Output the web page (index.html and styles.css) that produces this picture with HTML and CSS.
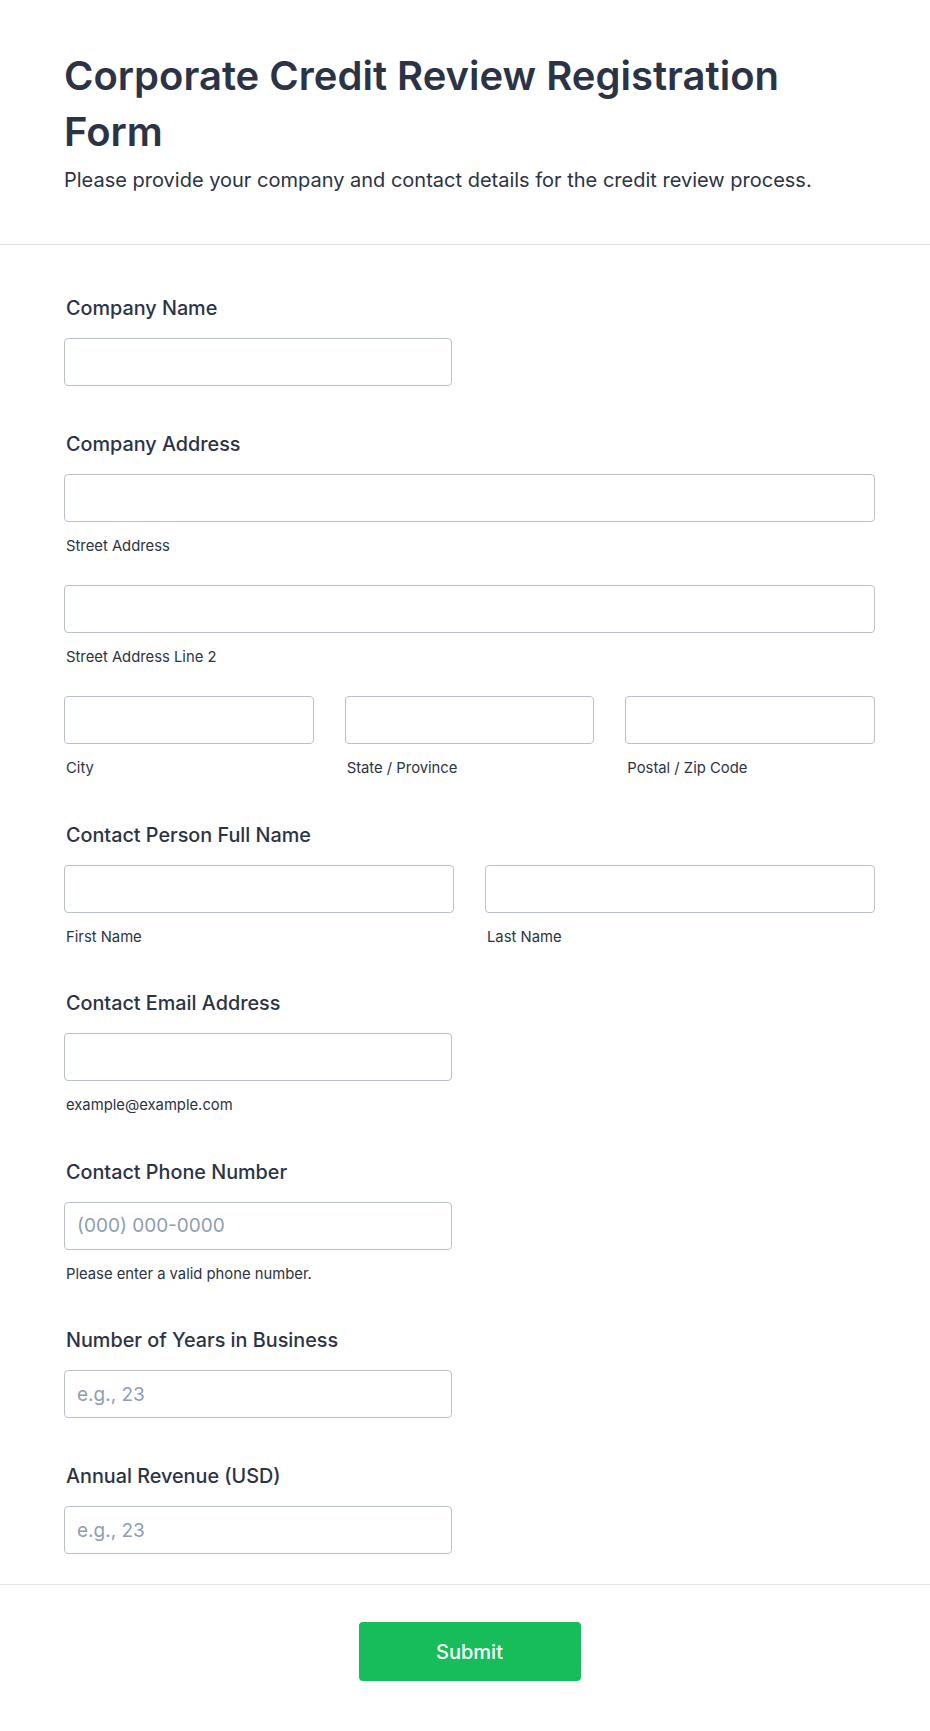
FILE: index.html
```html
<!DOCTYPE html>
<html lang="en">
<head>
<meta charset="utf-8">
<title>Corporate Credit Review Registration Form</title>
<link rel="stylesheet" href="styles.css">
</head>
<body>
<main class="form">
  <header class="form-header">
    <h1 class="form-title">Corporate Credit Review Registration Form</h1>
    <p class="form-subtitle">Please provide your company and contact details for the credit review process.</p>
  </header>

  <section class="form-body">
    <div class="field plain">
      <label class="field-label" for="company">Company Name</label>
      <input class="input half" id="company" type="text">
    </div>

    <div class="field">
      <label class="field-label" for="street1">Company Address</label>
      <div class="address">
        <div class="sub">
          <input class="input" id="street1" type="text">
          <span class="sublabel">Street Address</span>
        </div>
        <div class="sub">
          <input class="input" type="text">
          <span class="sublabel">Street Address Line 2</span>
        </div>
        <div class="cols three">
          <div class="sub">
            <input class="input" type="text">
            <span class="sublabel">City</span>
          </div>
          <div class="sub">
            <input class="input" type="text">
            <span class="sublabel">State / Province</span>
          </div>
          <div class="sub">
            <input class="input" type="text">
            <span class="sublabel">Postal / Zip Code</span>
          </div>
        </div>
      </div>
    </div>

    <div class="field">
      <label class="field-label" for="first">Contact Person Full Name</label>
      <div class="cols two">
        <div class="sub">
          <input class="input" id="first" type="text">
          <span class="sublabel">First Name</span>
        </div>
        <div class="sub">
          <input class="input" type="text">
          <span class="sublabel">Last Name</span>
        </div>
      </div>
    </div>

    <div class="field">
      <label class="field-label" for="email">Contact Email Address</label>
      <div class="sub half">
        <input class="input" id="email" type="email">
        <span class="sublabel">example@example.com</span>
      </div>
    </div>

    <div class="field">
      <label class="field-label" for="phone">Contact Phone Number</label>
      <div class="sub half">
        <input class="input" id="phone" type="tel" placeholder="(000) 000-0000">
        <span class="sublabel">Please enter a valid phone number.</span>
      </div>
    </div>

    <div class="field plain">
      <label class="field-label" for="years">Number of Years in Business</label>
      <input class="input half" id="years" type="text" placeholder="e.g., 23">
    </div>

    <div class="field last">
      <label class="field-label" for="revenue">Annual Revenue (USD)</label>
      <input class="input half" id="revenue" type="text" placeholder="e.g., 23">
    </div>
  </section>

  <footer class="form-footer">
    <button class="submit" type="submit">Submit</button>
  </footer>
</main>
</body>
</html>
```
FILE: styles.css
```css
* { box-sizing: border-box; }

html, body {
  margin: 0;
  padding: 0;
  background: #ffffff;
}

body {
  font-family: Inter, "Noto Sans", "Liberation Sans", sans-serif;
  color: #2c3345;
}

.form {
  width: 930px;
}

.form-header {
  padding: 48px 55px 52px 64px;
  border-bottom: 1px solid #dfe0e8;
}

.form-title {
  margin: 0;
  max-width: 770px;
  font-size: 40px;
  line-height: 56px;
  font-weight: 600;
  color: #2c3345;
}

.form-subtitle {
  margin: 8px 0 0;
  font-size: 20px;
  line-height: 24px;
  font-weight: 400;
}

.form-body {
  padding: 51px 55px 30px 64px;
  border-bottom: 1px solid #e6e7ed;
}

.field {
  display: flex;
  flex-direction: column;
  margin-bottom: 44.5px;
}

.field.plain {
  margin-bottom: 46px;
}

.field.last {
  margin-bottom: 0;
}

.field-label {
  display: block;
  padding-left: 2px;
  margin-bottom: 18px;
  font-size: 19.8px;
  line-height: 24px;
  font-weight: 500;
}

.address {
  display: flex;
  flex-direction: column;
  gap: 29px;
}

.cols {
  display: grid;
  column-gap: 31px;
}

.cols.two { grid-template-columns: 1fr 1fr; }
.cols.three { grid-template-columns: 1fr 1fr 1fr; }

.sub {
  display: flex;
  flex-direction: column;
}

.half {
  width: 388px;
}

.input {
  display: block;
  width: 100%;
  height: 48px;
  margin: 0;
  padding: 0 12px;
  border: 1px solid #b9bfcc;
  border-radius: 4px;
  background: #ffffff;
  font-family: Inter, "Noto Sans", "Liberation Sans", sans-serif;
  font-size: 19px;
  color: #2c3345;
  outline: none;
}

.input.half {
  width: 388px;
}

.input::placeholder {
  color: #8d9db3;
  opacity: 1;
}

.sublabel {
  display: block;
  margin-top: 14px;
  padding-left: 2px;
  font-size: 14.8px;
  line-height: 20px;
  font-weight: 400;
  color: #2c3345;
}

.form-footer {
  display: flex;
  justify-content: center;
  padding: 37px 55px 50px 64px;
}

.submit {
  width: 222px;
  height: 59px;
  border: none;
  border-radius: 4px;
  background: #18bd5b;
  color: #ffffff;
  font-family: Inter, "Noto Sans", "Liberation Sans", sans-serif;
  font-size: 20px;
  font-weight: 500;
  cursor: pointer;
}
```
